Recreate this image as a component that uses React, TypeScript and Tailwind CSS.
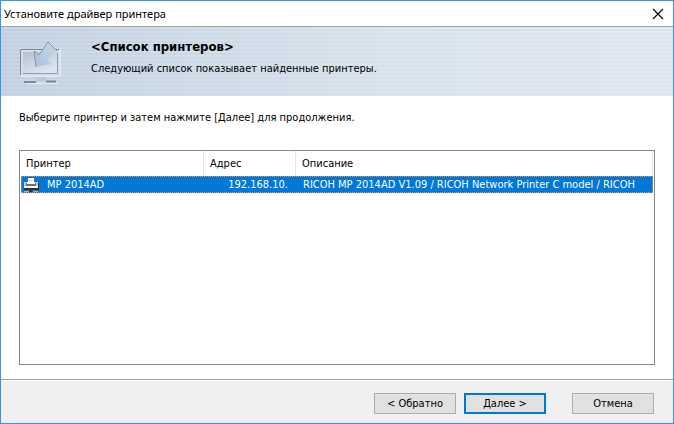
interface Printer {
  id: number
  name: string
  address: string
  description: string
}

const printers: Printer[] = [
  {
    id: 1,
    name: 'MP 2014AD',
    address: '192.168.10.',
    description: 'RICOH MP 2014AD V1.09 / RICOH Network Printer C model / RICOH',
  },
]

function InstallIcon() {
  return (
    <svg width="44" height="46" viewBox="0 0 44 46" fill="none" aria-hidden="true">
      <defs>
        <linearGradient id="screen" x1="0" y1="0" x2="0.6" y2="1">
          <stop offset="0" stopColor="#b4c2d0" />
          <stop offset="1" stopColor="#dce6f0" />
        </linearGradient>
        <linearGradient id="arrow" x1="1" y1="0" x2="0" y2="1">
          <stop offset="0" stopColor="#c9d9ea" />
          <stop offset="1" stopColor="#a9bfd7" />
        </linearGradient>
      </defs>
      <path d="M1 10H42V37H1Z" fill="#d3dfeb" />
      <path d="M4 13H38V34H4Z" fill="url(#screen)" />
      <path d="M1.500 36V10.500H25M35 10.500H40" stroke="#7f8790" />
      <path d="M2 37.500H41.500V11" stroke="#e3ecf5" />
      <path d="M4 34.500H38.500V14" stroke="#929da9" />
      <path d="M16 38H28V42H38V44H5V42H16Z" fill="#cad7e4" />
      <path d="M16 38.500H28" stroke="#b3bfcb" />
      <path d="M16 38H28V40L26 42H18L16 40Z" fill="#bccad8" />
      <path d="M5 43H17M27 42.500H37" stroke="#7f8790" strokeWidth="2" />
      <path d="M7 44.500H38V43" stroke="#e3ecf5" />
      <path d="M29 3L38 12L28 21L33 25L17 28L15 12L20 16Z" fill="url(#arrow)" />
      <path d="M17 28L15 12L20 16L29 3L38 12" stroke="#87929e" />
      <path d="M38 12L28 21L33 25L17 28" stroke="#c9d8e7" />
    </svg>
  )
}

function PrinterIcon() {
  return (
    <svg width="16" height="16" viewBox="0 0 16 16" shapeRendering="crispEdges" aria-hidden="true">
      <path d="M5 1H11V5H12V7H4V5H5Z" fill="#fff" />
      <path d="M6 3H10V4H6Z" fill="#d8d8d8" />
      <path d="M1 5H4V7H12V5H15V10H1Z" fill="#c8c8c8" />
      <path d="M3 6H4V7H12V6H13V9H3Z" fill="#707070" />
      <path d="M1 9H15V11H1Z" fill="#f4f4f4" />
      <path d="M1 11H16V13H1ZM15 6H16V12H15Z" fill="#303030" />
      <path d="M7 13H9V14H7Z" fill="#303030" />
      <path d="M1 14H7V15H1ZM9 14H15V15H9Z" fill="#b0b0b0" />
      <path d="M6 14H10V15H6Z" fill="#303030" />
    </svg>
  )
}

const buttonBase = 'h-[21px] w-[82px] bg-[#e1e1e1] text-center leading-4'

export default function App() {
  return (
    <div className="flex min-h-screen flex-col border border-[#3b90e8] bg-white font-['DejaVu_Sans_Condensed','DejaVu_Sans',sans-serif] text-[11px] leading-4 text-black">
      <header className="flex h-[25px] items-center justify-between pl-[3px] pr-2">
        <h1 className="font-['Noto_Sans',sans-serif]">Установите драйвер принтера</h1>
        <button type="button" aria-label="Закрыть" className="p-px">
          <svg width="12" height="12" viewBox="0 0 12 12" stroke="#000" strokeWidth="1.1" aria-hidden="true">
            <path d="M1 1L11 11M11 1L1 11" />
          </svg>
        </button>
      </header>

      <section className="flex h-[70px] gap-7 border-t border-[#a0a0a0] bg-[repeating-linear-gradient(to_bottom,rgba(255,255,255,0.10)_0px_2px,rgba(140,165,190,0.04)_2px_4px),linear-gradient(to_right,#c3d2e2,#dae4ed_60%,#e0e8f0)] pl-[18px] pt-3">
        <InstallIcon />
        <div>
          <h2 className="text-[13px] font-bold">&lt;Список принтеров&gt;</h2>
          <p className="mt-[6px]">Следующий список показывает найденные принтеры.</p>
        </div>
      </section>

      <main className="flex grow flex-col px-[18px] pb-[14px] pt-[14px]">
        <p>Выберите принтер и затем нажмите [Далее] для продолжения.</p>
        <div className="mt-6 grow border border-[#828790] px-px">
          <table className="w-full table-fixed border-separate border-spacing-0">
            <colgroup>
              <col className="w-[183px]" />
              <col className="w-[92px]" />
              <col />
            </colgroup>
            <thead>
              <tr className="h-[25px] text-left">
                <th className="border-r border-[#e5e5e5] pl-[5px] font-normal">Принтер</th>
                <th className="border-r border-[#e5e5e5] pl-[6px] font-normal">Адрес</th>
                <th className="border-r border-[#e5e5e5] pl-[6px] font-normal">Описание</th>
              </tr>
            </thead>
            <tbody>
              {printers.map((printer) => (
                <tr
                  key={printer.id}
                  aria-selected="true"
                  className="h-[17px] bg-[#0078d7] leading-[15px] text-white outline-1 -outline-offset-1 outline-dotted outline-[#ff8728]"
                >
                  <td className="p-0 pl-[2px]">
                    <span className="flex h-[17px] items-center gap-2">
                      <PrinterIcon />
                      {printer.name}
                    </span>
                  </td>
                  <td className="p-0 pr-2 text-right">{printer.address}</td>
                  <td className="whitespace-nowrap p-0 pl-[7px]">{printer.description}</td>
                </tr>
              ))}
            </tbody>
          </table>
        </div>
      </main>

      <footer className="flex justify-end border-t border-[#a0a0a0] bg-[#f0f0f0] pb-[9px] pr-[19px] pt-[13px] shadow-[inset_0_1px_0_#fff]">
        <button type="button" className={`${buttonBase} border border-[#adadad]`}>
          &lt; Обратно
        </button>
        <button type="button" className={`${buttonBase} ml-2 border-2 border-[#0078d7]`}>
          Далее &gt;
        </button>
        <button type="button" className={`${buttonBase} ml-[26px] border border-[#adadad]`}>
          Отмена
        </button>
      </footer>
    </div>
  )
}
